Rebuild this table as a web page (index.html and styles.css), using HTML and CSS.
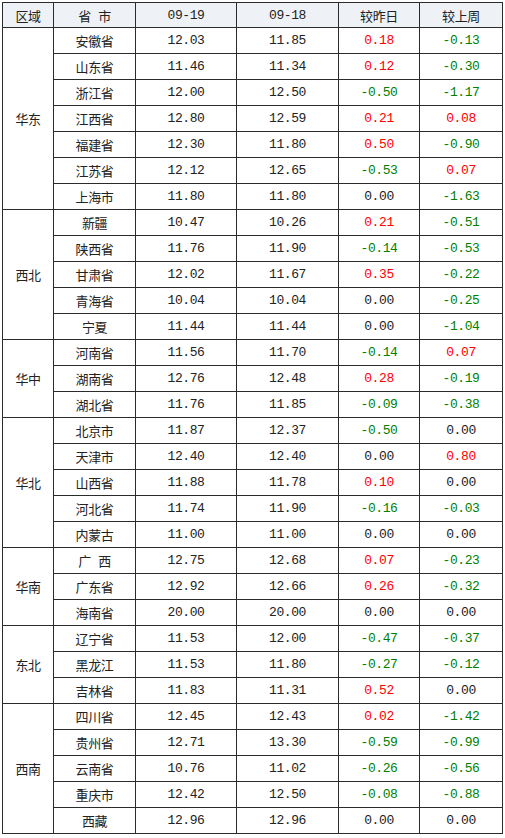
FILE: index.html
```html
<!DOCTYPE html>
<html lang="zh">
<head>
<meta charset="utf-8">
<title>猪价</title>
<link rel="stylesheet" href="styles.css">
</head>
<body>
<table class="price-table">
<colgroup>
<col class="c-region"><col class="c-prov"><col class="c-d1"><col class="c-d2"><col class="c-chg"><col class="c-wk">
</colgroup>
<thead>
<tr><th>区域</th><th>省 市</th><th>09-19</th><th>09-18</th><th>较昨日</th><th>较上周</th></tr>
</thead>
<tbody>
<tr><td rowspan="7">华东</td><td>安徽省</td><td>12.03</td><td>11.85</td><td class="up">0.18</td><td class="down">-0.13</td></tr>
<tr><td>山东省</td><td>11.46</td><td>11.34</td><td class="up">0.12</td><td class="down">-0.30</td></tr>
<tr><td>浙江省</td><td>12.00</td><td>12.50</td><td class="down">-0.50</td><td class="down">-1.17</td></tr>
<tr><td>江西省</td><td>12.80</td><td>12.59</td><td class="up">0.21</td><td class="up">0.08</td></tr>
<tr><td>福建省</td><td>12.30</td><td>11.80</td><td class="up">0.50</td><td class="down">-0.90</td></tr>
<tr><td>江苏省</td><td>12.12</td><td>12.65</td><td class="down">-0.53</td><td class="up">0.07</td></tr>
<tr><td>上海市</td><td>11.80</td><td>11.80</td><td>0.00</td><td class="down">-1.63</td></tr>
<tr><td rowspan="5">西北</td><td>新疆</td><td>10.47</td><td>10.26</td><td class="up">0.21</td><td class="down">-0.51</td></tr>
<tr><td>陕西省</td><td>11.76</td><td>11.90</td><td class="down">-0.14</td><td class="down">-0.53</td></tr>
<tr><td>甘肃省</td><td>12.02</td><td>11.67</td><td class="up">0.35</td><td class="down">-0.22</td></tr>
<tr><td>青海省</td><td>10.04</td><td>10.04</td><td>0.00</td><td class="down">-0.25</td></tr>
<tr><td>宁夏</td><td>11.44</td><td>11.44</td><td>0.00</td><td class="down">-1.04</td></tr>
<tr><td rowspan="3">华中</td><td>河南省</td><td>11.56</td><td>11.70</td><td class="down">-0.14</td><td class="up">0.07</td></tr>
<tr><td>湖南省</td><td>12.76</td><td>12.48</td><td class="up">0.28</td><td class="down">-0.19</td></tr>
<tr><td>湖北省</td><td>11.76</td><td>11.85</td><td class="down">-0.09</td><td class="down">-0.38</td></tr>
<tr><td rowspan="5">华北</td><td>北京市</td><td>11.87</td><td>12.37</td><td class="down">-0.50</td><td>0.00</td></tr>
<tr><td>天津市</td><td>12.40</td><td>12.40</td><td>0.00</td><td class="up">0.80</td></tr>
<tr><td>山西省</td><td>11.88</td><td>11.78</td><td class="up">0.10</td><td>0.00</td></tr>
<tr><td>河北省</td><td>11.74</td><td>11.90</td><td class="down">-0.16</td><td class="down">-0.03</td></tr>
<tr><td>内蒙古</td><td>11.00</td><td>11.00</td><td>0.00</td><td>0.00</td></tr>
<tr><td rowspan="3">华南</td><td>广 西</td><td>12.75</td><td>12.68</td><td class="up">0.07</td><td class="down">-0.23</td></tr>
<tr><td>广东省</td><td>12.92</td><td>12.66</td><td class="up">0.26</td><td class="down">-0.32</td></tr>
<tr><td>海南省</td><td>20.00</td><td>20.00</td><td>0.00</td><td>0.00</td></tr>
<tr><td rowspan="3">东北</td><td>辽宁省</td><td>11.53</td><td>12.00</td><td class="down">-0.47</td><td class="down">-0.37</td></tr>
<tr><td>黑龙江</td><td>11.53</td><td>11.80</td><td class="down">-0.27</td><td class="down">-0.12</td></tr>
<tr><td>吉林省</td><td>11.83</td><td>11.31</td><td class="up">0.52</td><td>0.00</td></tr>
<tr><td rowspan="5">西南</td><td>四川省</td><td>12.45</td><td>12.43</td><td class="up">0.02</td><td class="down">-1.42</td></tr>
<tr><td>贵州省</td><td>12.71</td><td>13.30</td><td class="down">-0.59</td><td class="down">-0.99</td></tr>
<tr><td>云南省</td><td>10.76</td><td>11.02</td><td class="down">-0.26</td><td class="down">-0.56</td></tr>
<tr><td>重庆市</td><td>12.42</td><td>12.50</td><td class="down">-0.08</td><td class="down">-0.88</td></tr>
<tr><td>西藏</td><td>12.96</td><td>12.96</td><td>0.00</td><td>0.00</td></tr>
</tbody>
</table>
</body>
</html>
```
FILE: styles.css
```css
html, body {
  margin: 0;
  padding: 0;
  background: #fff;
}
body {
  padding: 2px 0 0 2px;
}
.price-table {
  border-collapse: collapse;
  table-layout: fixed;
  width: 500px;
  font-family: "Liberation Mono", "Noto Sans CJK SC", monospace;
  font-size: 13px;
  color: #222;
}
.c-region { width: 51px; }
.c-prov { width: 82px; }
.c-d1 { width: 101px; }
.c-d2 { width: 102px; }
.c-chg { width: 81px; }
.c-wk { width: 83px; }
.price-table th,
.price-table td {
  border: 1px solid #2b2b2b;
  padding: 0;
  text-align: center;
  vertical-align: middle;
  white-space: pre;
  letter-spacing: -0.4px;
}
.price-table th {
  height: 24px;
  background: #eef2f6;
  font-weight: normal;
}
.price-table td {
  height: 25px;
}
.price-table .up { color: #ff0000; }
.price-table .down { color: #008000; }
```
